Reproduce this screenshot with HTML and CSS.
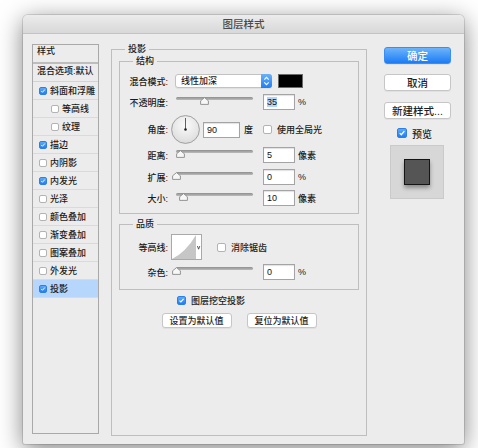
FILE: index.html
```html
<!DOCTYPE html>
<html lang="zh-CN">
<head>
<meta charset="utf-8">
<title>图层样式</title>
<link rel="stylesheet" href="styles.css">
</head>
<body>
<div class="window">
  <div class="titlebar">图层样式</div>
  <div class="content">
    <div class="list">
      <div class="list-head">样式</div>
      <div class="list-blend">混合选项:默认</div>
      <div class="item"><span class="cb on"><svg viewBox="0 0 8 8"><path d="M1.7 4.1 L3.3 5.7 L6.4 2.1"/></svg></span>斜面和浮雕</div>
      <div class="item sub"><span class="cb"></span>等高线</div>
      <div class="item sub"><span class="cb"></span>纹理</div>
      <div class="item"><span class="cb on"><svg viewBox="0 0 8 8"><path d="M1.7 4.1 L3.3 5.7 L6.4 2.1"/></svg></span>描边</div>
      <div class="item"><span class="cb"></span>内阴影</div>
      <div class="item"><span class="cb on"><svg viewBox="0 0 8 8"><path d="M1.7 4.1 L3.3 5.7 L6.4 2.1"/></svg></span>内发光</div>
      <div class="item"><span class="cb"></span>光泽</div>
      <div class="item"><span class="cb"></span>颜色叠加</div>
      <div class="item"><span class="cb"></span>渐变叠加</div>
      <div class="item"><span class="cb"></span>图案叠加</div>
      <div class="item"><span class="cb"></span>外发光</div>
      <div class="item selected"><span class="cb on"><svg viewBox="0 0 8 8"><path d="M1.7 4.1 L3.3 5.7 L6.4 2.1"/></svg></span>投影</div>
    </div>

    <fieldset class="outer">
      <legend class="legend-outer">投影</legend>

      <fieldset class="group structure">
        <legend>结构</legend>
        <div class="row row-mode">
          <span class="lbl">混合模式:</span>
          <div class="select">
            <span class="select-text">线性加深</span>
            <span class="select-arrow"><svg width="11" height="14" viewBox="0 0 11 14"><path d="M3.3 5.6 L5.5 3.4 L7.7 5.6 M3.3 8.4 L5.5 10.6 L7.7 8.4"/></svg></span>
          </div>
          <span class="swatch"></span>
        </div>
        <div class="row row-opacity">
          <span class="lbl">不透明度:</span>
          <div class="slider"><span class="track"></span><svg class="thumb" style="left:24px" width="9" height="8" viewBox="0 0 9 8"><path d="M4.5 0.6 L8.4 3.8 L8.4 7.4 L0.6 7.4 L0.6 3.8 Z"/></svg></div>
          <span class="num"><span class="sel">35</span></span>
          <span class="unit">%</span>
        </div>
        <div class="row row-angle">
          <span class="lbl">角度:</span>
          <svg class="dial" width="29" height="29" viewBox="0 0 29 29">
            <defs><radialGradient id="dg" cx="50%" cy="35%" r="65%"><stop offset="0" stop-color="#fbfbfb"/><stop offset="1" stop-color="#dcdcdc"/></radialGradient></defs>
            <circle cx="14.5" cy="14.5" r="13.9" fill="url(#dg)" stroke="#8c8c8c" stroke-width="0.8"/>
            <line x1="14.5" y1="14.5" x2="14.5" y2="3" stroke="#3a3a3a" stroke-width="0.8"/>
            <circle cx="14.5" cy="14.5" r="1.3" fill="#222"/>
          </svg>
          <span class="num num-angle">90</span>
          <span class="unit unit-deg">度</span>
          <span class="cb mid"></span>
          <span class="cb-text">使用全局光</span>
        </div>
        <div class="row row-dist">
          <span class="lbl">距离:</span>
          <div class="slider"><span class="track"></span><svg class="thumb" style="left:0px" width="9" height="8" viewBox="0 0 9 8"><path d="M4.5 0.6 L8.4 3.8 L8.4 7.4 L0.6 7.4 L0.6 3.8 Z"/></svg></div>
          <span class="num">5</span>
          <span class="unit">像素</span>
        </div>
        <div class="row row-spread">
          <span class="lbl">扩展:</span>
          <div class="slider"><span class="track"></span><svg class="thumb" style="left:-4px" width="9" height="8" viewBox="0 0 9 8"><path d="M4.5 0.6 L8.4 3.8 L8.4 7.4 L0.6 7.4 L0.6 3.8 Z"/></svg></div>
          <span class="num">0</span>
          <span class="unit">%</span>
        </div>
        <div class="row row-size">
          <span class="lbl">大小:</span>
          <div class="slider"><span class="track"></span><svg class="thumb" style="left:3px" width="9" height="8" viewBox="0 0 9 8"><path d="M4.5 0.6 L8.4 3.8 L8.4 7.4 L0.6 7.4 L0.6 3.8 Z"/></svg></div>
          <span class="num">10</span>
          <span class="unit">像素</span>
        </div>
      </fieldset>

      <fieldset class="group quality">
        <legend>品质</legend>
        <div class="row row-contour">
          <span class="lbl">等高线:</span>
          <svg class="contour" width="31" height="26" viewBox="0 0 31 26">
            <rect x="0.5" y="0.5" width="30" height="25" fill="#fff" stroke="#a9a9a9"/>
            <path d="M1 25 Q 15 18 25 1 L25 25 Z" fill="#c6c6c6"/>
            <path d="M26.4 12 L27.6 15.2 L28.8 12" fill="none" stroke="#333" stroke-width="0.8"/>
          </svg>
          <span class="cb mid aa"></span>
          <span class="cb-text">消除锯齿</span>
        </div>
        <div class="row row-noise">
          <span class="lbl">杂色:</span>
          <div class="slider"><span class="track"></span><svg class="thumb" style="left:-4px" width="9" height="8" viewBox="0 0 9 8"><path d="M4.5 0.6 L8.4 3.8 L8.4 7.4 L0.6 7.4 L0.6 3.8 Z"/></svg></div>
          <span class="num">0</span>
          <span class="unit">%</span>
        </div>
      </fieldset>

      <div class="knock">
        <span class="cb mid on"><svg viewBox="0 0 8 8"><path d="M1.7 4.1 L3.3 5.7 L6.4 2.1"/></svg></span>
        <span class="cb-text">图层挖空投影</span>
      </div>
      <div class="defaults">
        <span class="btn btn-sm">设置为默认值</span>
        <span class="btn btn-sm">复位为默认值</span>
      </div>
    </fieldset>

    <div class="right">
      <span class="btn primary">确定</span>
      <span class="btn cancel">取消</span>
      <span class="btn newstyle">新建样式...</span>
      <div class="preview-check">
        <span class="cb big on"><svg viewBox="0 0 8 8"><path d="M1.7 4.1 L3.3 5.7 L6.4 2.1"/></svg></span>
        <span class="preview-text">预览</span>
      </div>
      <div class="preview-box"><span class="preview-square"></span></div>
    </div>
  </div>
</div>
</body>
</html>
```

FILE: styles.css
```css
* { box-sizing: border-box; }
html, body { margin: 0; padding: 0; }
body {
  background: #ffffff;
  width: 478px;
  height: 448px;
  overflow: hidden;
  font-family: "Liberation Sans", "Noto Sans CJK SC", sans-serif;
  font-size: 9px;
  font-weight: 500;
  color: #1a1a1a;
}

.window {
  margin: 15px 0 0 23px;
  width: 441px;
  height: 429px;
  background: #ececec;
  border-radius: 5px 5px 2px 2px;
  box-shadow: 0 5px 24px rgba(0, 0, 0, 0.5), 0 0 0 1px rgba(0, 0, 0, 0.12);
  overflow: hidden;
}

.titlebar {
  height: 19px;
  border-bottom: 1px solid #c3c3c3;
  background: linear-gradient(#ececec, #d8d8d8);
  text-align: center;
  font-size: 10.5px;
  line-height: 19px;
  color: #4a4a4a;
}

.content {
  display: flex;
  align-items: flex-start;
  padding-left: 9px;
}

/* left list */
.list {
  flex: none;
  margin-top: 10px;
  width: 67px;
  height: 390px;
  border: 1px solid #a9a9a9;
  background: #ececec;
}
.list-head {
  height: 19px;
  line-height: 13px;
  padding-left: 4px;
  border-bottom: 2px solid #bdbdbd;
}
.list-blend {
  height: 18px;
  line-height: 15px;
  padding-left: 4px;
  border-bottom: 1px solid #d3d3d3;
  white-space: nowrap;
}
.item {
  height: 18px;
  display: flex;
  align-items: center;
  padding-left: 6px;
  border-bottom: 1px solid #dadada;
  white-space: nowrap;
}
.item.sub { padding-left: 18px; }
.item.selected { background: #b6d6fc; }
.item .cb { margin-right: 3px; }

/* checkboxes */
.cb {
  flex: none;
  display: inline-flex;
  width: 8px;
  height: 8px;
  background: #fff;
  border: 1px solid #b3b3b3;
  border-radius: 2px;
}
.cb.mid { width: 9px; height: 9px; }
.cb.big { width: 10px; height: 10px; }
.cb.on {
  background: linear-gradient(#5eaafa, #1f7ff5);
  border-color: #2d7ee6;
}
.cb svg { width: 100%; height: 100%; }
.cb svg path { fill: none; stroke: #fff; stroke-width: 1.3; }
.cb-text { margin-left: 5px; white-space: nowrap; }

/* middle */
fieldset {
  margin: 0;
  min-width: 0;
}
legend {
  padding: 0 3px;
  line-height: 12px;
  font-size: 9px;
}
.outer {
  flex: none;
  margin-top: 9px;
  margin-left: 12px;
  width: 256px;
  height: 393px;
  border: 1px solid #bebebe;
  padding: 0 7px;
}
.legend-outer { margin-left: 6px; }
.group {
  width: 240px;
  border: 1px solid #bebebe;
  padding: 0;
}
.group legend { margin-left: 13px; }
.structure { padding-bottom: 7px; }
.quality { margin-top: 4px; padding-bottom: 9px; }

.row {
  display: flex;
  align-items: center;
  height: 16px;
}
.lbl {
  flex: none;
  width: 48px;
  text-align: right;
  white-space: nowrap;
}
.row-mode { margin-top: 7px; height: 14px; }
.row-opacity { margin-top: 6px; }
.row-angle { margin-top: 5px; height: 29px; }
.row-dist { margin-top: 3px; }
.row-spread { margin-top: 6px; }
.row-size { margin-top: 5px; }
.row-contour { margin-top: 4px; height: 26px; }
.row-noise { margin-top: 4px; }

.select {
  flex: none;
  margin-left: 7px;
  width: 97px;
  height: 14px;
  display: flex;
  background: #fff;
  border: 1px solid #c2c2c2;
  border-radius: 3px;
  box-shadow: 0 1px 1px rgba(0, 0, 0, 0.06);
}
.select-text {
  flex: 1;
  padding-left: 5px;
  line-height: 12px;
}
.select-arrow {
  flex: none;
  width: 11px;
  margin: -1px -1px -1px 0;
  background: linear-gradient(#6ab0f9, #1e7ff4);
  border-radius: 0 3px 3px 0;
  display: flex;
}
.select-arrow path { fill: none; stroke: #fff; stroke-width: 1.1; }

.swatch {
  flex: none;
  margin-left: 6px;
  width: 25px;
  height: 14px;
  background: #000;
  border: 1px solid #6a6a6a;
}

.slider {
  flex: none;
  position: relative;
  margin-left: 8px;
  width: 77px;
  height: 16px;
}
.track {
  display: block;
  margin-top: 3px;
  height: 3px;
  border-radius: 2px;
  background: linear-gradient(#8e8e8e, #bcbcbc);
}
.thumb {
  position: absolute;
  top: 3px;
}
.thumb path { fill: #f7f7f7; stroke: #8a8a8a; stroke-width: 0.9; }

.num {
  flex: none;
  margin-left: 10px;
  width: 32px;
  height: 16px;
  border: 1px solid #a4a4a4;
  background: #fff;
  box-shadow: inset 0 1px 1px rgba(0, 0, 0, 0.12);
  padding-left: 3px;
  line-height: 14px;
  font-size: 9px;
  color: #111;
}
.sel { background: #b3d5fd; }
.num-angle { margin-left: 3px; width: 37px; }
.unit { margin-left: 3px; white-space: nowrap; }
.unit-deg { margin-left: 4px; }
.row-angle .cb { margin-left: 10px; }

.dial { flex: none; margin-left: 3px; }
.contour { flex: none; margin-left: 3px; }
.aa { margin-left: 15px; }

.knock {
  display: flex;
  align-items: center;
  height: 10px;
  margin-top: 5px;
  padding-left: 58px;
}
.defaults {
  display: flex;
  justify-content: center;
  gap: 15px;
  margin-top: 8px;
}

/* buttons */
.btn {
  display: flex;
  align-items: center;
  justify-content: center;
  height: 17px;
  background: #fff;
  border: 1px solid #c6c6c6;
  border-radius: 3px;
  box-shadow: 0 1px 0 rgba(0, 0, 0, 0.05);
  font-size: 10.5px;
  color: #1e1e1e;
  white-space: nowrap;
}
.btn.primary {
  background: linear-gradient(#6db4fb, #1c7cf4);
  border-color: #3b8ef1;
  color: #fff;
}
.btn-sm {
  width: 70px;
  height: 15px;
  font-size: 9px;
}

.right {
  flex: none;
  margin-top: 13px;
  margin-left: 17px;
  width: 67px;
}
.cancel { margin-top: 10px; }
.newstyle { margin-top: 11px; }
.preview-check {
  display: flex;
  align-items: center;
  height: 12px;
  margin-top: 8px;
  padding-left: 13px;
}
.preview-text { margin-left: 5px; font-size: 10px; }
.preview-box {
  margin: 6px 0 0 6px;
  width: 54px;
  height: 54px;
  background: #d7d7d7;
  border: 1px solid #cacaca;
  display: flex;
  align-items: center;
  justify-content: center;
}
.preview-square {
  width: 26px;
  height: 26px;
  background: #555555;
  border: 1px solid #151515;
  box-shadow: 0 3px 4px rgba(0, 0, 0, 0.35);
}
```
